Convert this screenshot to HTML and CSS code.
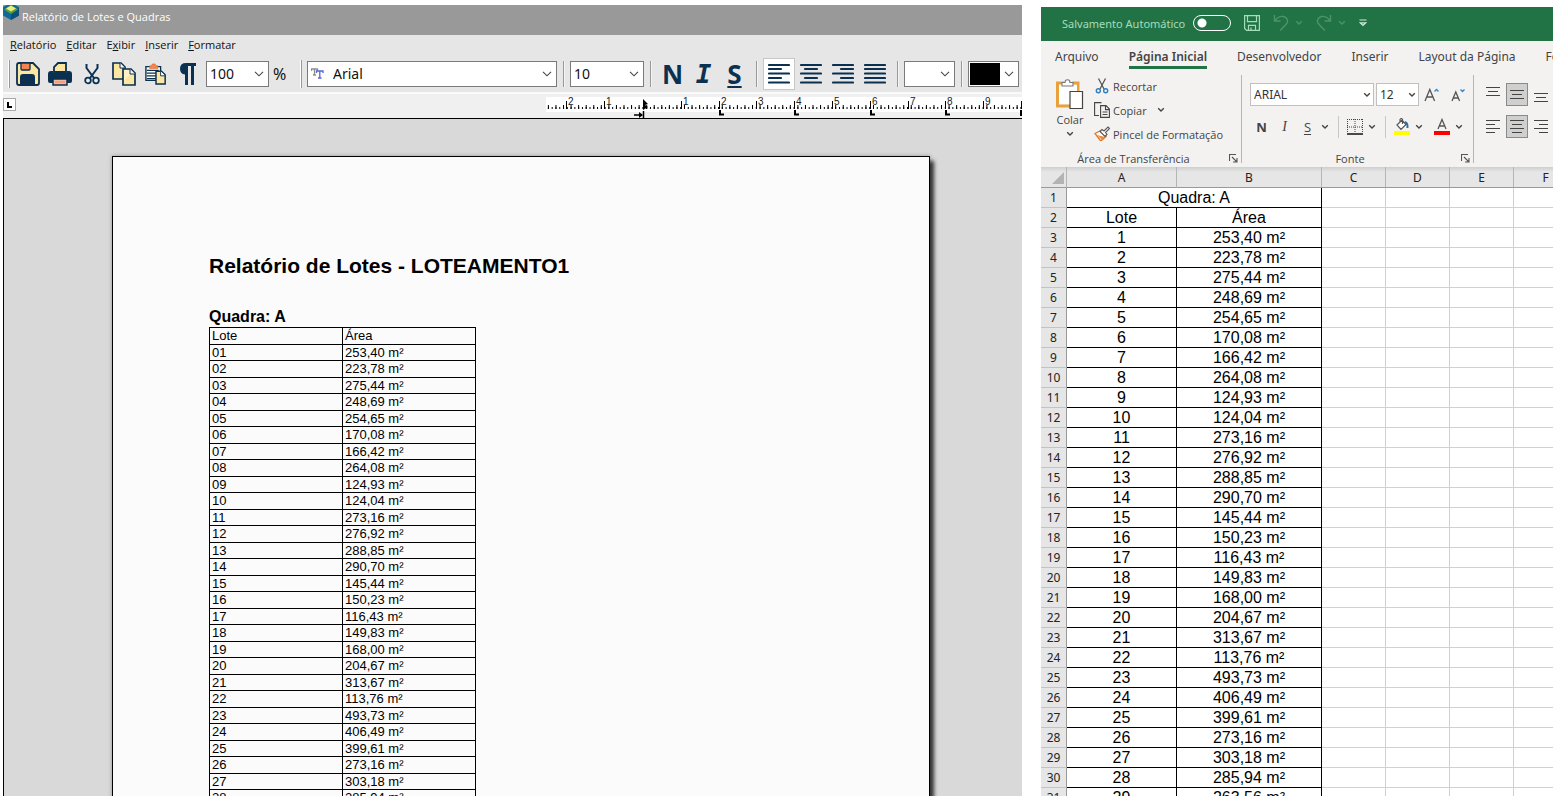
FILE: index.html
```html
<!DOCTYPE html>
<html lang="pt-BR">
<head>
<meta charset="utf-8">
<title>Relatório de Lotes e Quadras</title>
<link rel="stylesheet" href="styles.css">
</head>
<body>
<svg class="defs" aria-hidden="true">
  <symbol id="chev-lg" viewBox="0 0 10 6"><path d="M1 .8 5 4.8 9 .8" fill="none" stroke="#444" stroke-width="1.1"/></symbol>
  <symbol id="chev" viewBox="0 0 8 6"><path d="M1.2 1.2 4 4 6.800 1.2" fill="none" stroke="currentColor" stroke-width="1.4"/></symbol>
  <symbol id="launcher" viewBox="0 0 9 9"><path d="M.5 7V.5H7M3 3l4.500 4.500M8 4v4H4" fill="none" stroke="#555" stroke-width="1.1"/></symbol>
</svg>
<main class="desktop">
<section class="report">
  <header class="report-title">
    <svg width="16" height="16" viewBox="0 0 16 16"><path d="M0 2 8-2l8 4v8.500L8 15 0 10.500z" fill="#0b6a97"/><path d="M8 8v7l8-4.500V3z" fill="#0a4f7d"/><path d="M1 4.500 8 0l7 4.500L8 9z" fill="#5b9e3c"/><path d="m3 3.500 5-3 5 3-5 3z" fill="#e8ef7c"/></svg>
    <span>Relatório de Lotes e Quadras</span>
  </header>
  <nav class="menubar">
    <button><u>R</u>elatório</button><button><u>E</u>ditar</button><button>E<u>x</u>ibir</button><button><u>I</u>nserir</button><button><u>F</u>ormatar</button>
  </nav>
  <div class="toolbar">
    <i class="grip"></i>
    <div class="tools">
      <button aria-label="Salvar"><svg width="24" height="24" viewBox="0 0 24 24"><path d="M1 3q0-2 2-2h14l6 6v14q0 2-2 2H3q-2 0-2-2z" fill="#fbe6a2" stroke="#0b3050" stroke-width="1.800"/><path d="M5 1h9v6q0 1-1 1H6Q5 8 5 7z" fill="#f0864f" stroke="#0b3050" stroke-width="1.300"/><path d="M4 23v-8q0-3 3-3h9q3 0 3 3v8z" fill="#0b3050"/></svg></button>
      <button aria-label="Imprimir"><svg width="24" height="24" viewBox="0 0 24 24"><path d="M6 10V5l4-4h8v9z" fill="#fbe6a2" stroke="#0b3050" stroke-width="1.800"/><path d="M0 12q0-3 3-3h2v2h14V9h2q3 0 3 3v7q0 2-2 2H2q-2 0-2-2z" fill="#0b3050"/><path d="M5 17h14v6H5z" fill="#f7b79c" stroke="#0b3050" stroke-width="1.500"/><path d="M7 20h10" stroke="#e88863"/></svg></button>
      <button aria-label="Recortar"><svg width="16" height="22" viewBox="0 0 16 22"><path d="M2.500 1v4L10 15M13.500 1v4L6 15" fill="none" stroke="#0b3050" stroke-width="2"/><circle cx="4" cy="17.500" r="2.800" fill="#eee" stroke="#0b3050" stroke-width="1.800"/><circle cx="12" cy="17.500" r="2.800" fill="#eee" stroke="#0b3050" stroke-width="1.800"/></svg></button>
      <button aria-label="Copiar"><svg width="24" height="24" viewBox="0 0 24 24"><path d="M1 1h8l4 4v12H1z" fill="#fbe6a2" stroke="#0b3050" stroke-width="1.700"/><path d="M8 1v5h5" fill="#fff" stroke="#0b3050"/><path d="M11 7h8l4 4v12H11z" fill="#fbe6a2" stroke="#0b3050" stroke-width="1.700"/><path d="M12 8h6v4l-6 7z" fill="#fff0c8"/><path d="M18 7v5h5" fill="#fff" stroke="#0b3050"/></svg></button>
      <button aria-label="Colar"><svg width="22" height="22" viewBox="0 0 24 24"><path d="M1 4h16v15H1z" fill="#fff" stroke="#0b3050" stroke-width="1.500"/><path d="M2 8h13M2 11h10M2 14h10M2 17h10" stroke="#0b3050" stroke-width="1.300"/><path d="M5 6V3h2l1-2h3l1 2h2v3z" fill="#f0864f" stroke="#d6652f" stroke-width=".6"/><path d="M12 9h6l4 4v10H12z" fill="#fbe6a2" stroke="#0b3050" stroke-width="1.600"/><path d="M17 9v5h5" fill="#fff" stroke="#0b3050"/></svg></button>
      <button aria-label="Marcas de parágrafo"><svg width="18" height="22" viewBox="0 0 18 22"><path d="M17 0v3h-2v19h-3V3H9v19H6V11.500Q1 11 1 5.700 1 0 7 0z" fill="#0b3050"/></svg></button>
    </div>
    <div class="combo zoom"><select aria-label="Zoom"><option>100</option></select><svg width="10" height="6"><use href="#chev-lg"/></svg></div>
    <span class="percent">%</span>
    <i class="grip"></i>
    <div class="combo face"><svg class="tt" width="13" height="11" viewBox="0 0 13 11"><path d="M.5 3V1h6v2M3.500 1v6M2 7h3" fill="none" stroke="#8d8d8d" stroke-width="1.300"/><path d="M5.500 5V3h6.500v2M8.800 3v7M7 10h3.500" fill="none" stroke="#5a62d8" stroke-width="1.300"/></svg><select aria-label="Fonte"><option>Arial</option></select><svg width="10" height="6"><use href="#chev-lg"/></svg></div>
    <i class="sep"></i>
    <div class="combo size"><select aria-label="Tamanho"><option>10</option></select><svg width="10" height="6"><use href="#chev-lg"/></svg></div>
    <i class="sep"></i>
    <div class="tools">
      <button class="glyph">N</button><button class="glyph italic">I</button><button class="glyph under">S</button>
    </div>
    <i class="sep"></i>
    <div class="tools">
      <button class="on" aria-label="Alinhar à esquerda"><svg width="22" height="22" viewBox="0 0 22 22"><path d="M1 2h20M1 6h12M1 10.500h20M1 15h12M1 19.500h20" stroke="#0b3050" stroke-width="2.200" stroke-linecap="round"/></svg></button>
      <button aria-label="Centralizar"><svg width="22" height="22" viewBox="0 0 22 22"><path d="M1 2h20M5 6h12M1 10.500h20M5 15h12M1 19.500h20" stroke="#0b3050" stroke-width="2.200" stroke-linecap="round"/></svg></button>
      <button aria-label="Alinhar à direita"><svg width="22" height="22" viewBox="0 0 22 22"><path d="M1 2h20M9 6h12M1 10.500h20M9 15h12M1 19.500h20" stroke="#0b3050" stroke-width="2.200" stroke-linecap="round"/></svg></button>
      <button aria-label="Justificar"><svg width="22" height="22" viewBox="0 0 22 22"><path d="M1 2h20M1 6h20M1 10.500h20M1 15h20M1 19.500h20" stroke="#0b3050" stroke-width="2.200" stroke-linecap="round"/></svg></button>
    </div>
    <i class="sep"></i>
    <div class="combo color"><select aria-label="Cor de fundo"><option></option></select><svg width="10" height="6"><use href="#chev-lg"/></svg></div>
    <i class="sep"></i>
    <div class="combo color"><i class="swatch"></i><select aria-label="Cor do texto"><option></option></select><svg width="10" height="6"><use href="#chev-lg"/></svg></div>
  </div>
  <div class="ruler">
    <button class="tabstop" aria-label="Tabulação"><svg width="5" height="6"><path d="M1 0v5h4" fill="none" stroke="#000" stroke-width="2"/></svg></button>
    <svg class="scale" width="476" height="21" viewBox="0 0 476 21">
      <path d="M0 0h476v15H0z" fill="#fff"/>
      <path d="M1.900 11h474" stroke="#000" stroke-width="2" stroke-dasharray="1 2.780"/>
      <path d="M1.900 10h474" stroke="#000" stroke-width="4" stroke-dasharray="1 6.560"/>
      <path d="M20.500 4v8M58.500 4v8M135.500 4v8M173.500 4v8M210.500 4v8M248.500 4v8M286.500 4v8M324.500 4v8M362.500 4v8M399.500 4v8M437.500 4v8M475.500 4v8" stroke="#000"/>
      <path d="M174 13v4.500h4M249 13v4.500h4M325 13v4.500h4M400 13v4.500h4M475 13v6" fill="none" stroke="#000" stroke-width="2"/>
      <path d="M97 2v11l5-3-3-2 3-1z"/>
      <path d="M97.500 14v7M88 18h8" stroke="#000" stroke-width="1.500"/><path d="m93 15 4 3-4 3z"/>
      <g><text x="22" y="8">2</text><text x="60" y="8">1</text><text x="137" y="8">1</text><text x="175" y="8">2</text><text x="212" y="8">3</text><text x="250" y="8">4</text><text x="288" y="8">5</text><text x="326" y="8">6</text><text x="364" y="8">7</text><text x="401" y="8">8</text><text x="439" y="8">9</text></g>
    </svg>
  </div>
  <div class="canvas">
    <article class="paper">
      <h1>Relatório de Lotes - LOTEAMENTO1</h1>
      <h2>Quadra: A</h2>
      <table class="lots">
        <thead><tr><th>Lote</th><th>Área</th></tr></thead>
        <tbody>
        <tr><td>01</td><td>253,40 m²</td></tr>
        <tr><td>02</td><td>223,78 m²</td></tr>
        <tr><td>03</td><td>275,44 m²</td></tr>
        <tr><td>04</td><td>248,69 m²</td></tr>
        <tr><td>05</td><td>254,65 m²</td></tr>
        <tr><td>06</td><td>170,08 m²</td></tr>
        <tr><td>07</td><td>166,42 m²</td></tr>
        <tr><td>08</td><td>264,08 m²</td></tr>
        <tr><td>09</td><td>124,93 m²</td></tr>
        <tr><td>10</td><td>124,04 m²</td></tr>
        <tr><td>11</td><td>273,16 m²</td></tr>
        <tr><td>12</td><td>276,92 m²</td></tr>
        <tr><td>13</td><td>288,85 m²</td></tr>
        <tr><td>14</td><td>290,70 m²</td></tr>
        <tr><td>15</td><td>145,44 m²</td></tr>
        <tr><td>16</td><td>150,23 m²</td></tr>
        <tr><td>17</td><td>116,43 m²</td></tr>
        <tr><td>18</td><td>149,83 m²</td></tr>
        <tr><td>19</td><td>168,00 m²</td></tr>
        <tr><td>20</td><td>204,67 m²</td></tr>
        <tr><td>21</td><td>313,67 m²</td></tr>
        <tr><td>22</td><td>113,76 m²</td></tr>
        <tr><td>23</td><td>493,73 m²</td></tr>
        <tr><td>24</td><td>406,49 m²</td></tr>
        <tr><td>25</td><td>399,61 m²</td></tr>
        <tr><td>26</td><td>273,16 m²</td></tr>
        <tr><td>27</td><td>303,18 m²</td></tr>
        <tr><td>28</td><td>285,94 m²</td></tr>
        </tbody>
      </table>
    </article>
  </div>
</section>

<section class="sheet">
  <header class="sheet-title">
    <label class="autosave">Salvamento Automático <input type="checkbox" role="switch"></label>
    <button aria-label="Salvar"><svg width="16" height="16" viewBox="0 0 16 16"><path d="M.600.6h14.800v14.800H2.600l-2-2zM3.500.6v6h9v-6M4.500 15.400v-5h7v5M7 12.500v3" fill="none" stroke="#a6dcb9" stroke-width="1.200"/></svg></button>
    <div class="pair">
      <button aria-label="Desfazer"><svg width="16" height="18" viewBox="0 0 16 18"><path d="M1.500 1v6h6M1.500 7Q6 1.500 10.500 2.500 15 4 14.500 8 14 10 7 16.500" fill="none" stroke="#4b9468" stroke-width="1.400"/></svg></button>
      <button aria-label="Opções de desfazer"><svg width="8" height="6"><use href="#chev"/></svg></button>
    </div>
    <div class="pair">
      <button aria-label="Refazer"><svg width="16" height="18" viewBox="0 0 16 18"><path d="M14.500 1v6h-6M14.500 7Q10 1.500 5.500 2.500 1 4 1.500 8 2 10 9 16.500" fill="none" stroke="#4b9468" stroke-width="1.400"/></svg></button>
      <button aria-label="Opções de refazer"><svg width="8" height="6"><use href="#chev"/></svg></button>
    </div>
    <button aria-label="Personalizar"><svg width="8" height="8" viewBox="0 0 8 8"><path d="M.5 1h7M1.200 3.800 4 6.500l2.800-2.700z" fill="none" stroke="#c9ead5" stroke-width="1.200"/></svg></button>
  </header>
  <nav class="tabs">
    <button>Arquivo</button><button class="active">Página Inicial</button><button>Desenvolvedor</button><button>Inserir</button><button>Layout da Página</button><button>Fórmulas</button>
  </nav>
  <div class="ribbon">
    <div class="group clip">
      <div class="group-body">
        <button class="paste">
          <svg width="28" height="30" viewBox="0 0 28 30"><path d="M8 4H1.500v23H14" fill="none" stroke="#e9a23b" stroke-width="3"/><path d="M16 4h6v8" fill="none" stroke="#e9a23b" stroke-width="3"/><path d="M3 6h18v6h-7v13H3z" fill="#fff"/><path d="M6 7V3.500h3Q9 .7 11.500.7T14 3.500h3V7z" fill="#fff" stroke="#777" stroke-width="1.100"/><path d="M14 12.500h12.500v17H14z" fill="#fff" stroke="#444" stroke-width="1.200"/></svg>
          <span>Colar</span>
          <svg width="8" height="6"><use href="#chev"/></svg>
        </button>
        <div class="clip-list">
          <button><svg width="16" height="16" viewBox="0 0 16 16"><path d="M4.500.5 10 11M11.500.5 6 11" fill="none" stroke="#555" stroke-width="1.300"/><circle cx="4.300" cy="12.800" r="2" fill="none" stroke="#2f7fc1" stroke-width="1.400"/><circle cx="11.700" cy="12.800" r="2" fill="none" stroke="#2f7fc1" stroke-width="1.400"/></svg>Recortar</button>
          <button><svg width="16" height="16" viewBox="0 0 16 16"><path d="M5 13.500H.6V.6h6.900M6.600 3.600h5.400l3.400 3.400v8.400H6.600zM11.500 3.600v4h4M8.500 10h5M8.500 12.500h5" fill="none" stroke="#444" stroke-width="1.100"/></svg>Copiar<svg class="more" width="8" height="6"><use href="#chev"/></svg></button>
          <button><svg width="16" height="16" viewBox="0 0 16 16"><path d="M1 7.500 6 5l6 5.500L8 14q-1 1-2 0z" fill="#fff" stroke="#dd7422" stroke-width="1.300"/><path d="m3 9 5 5 3-3z" fill="#f08a3c"/><path d="m6 5.500 2-2 2 1.500 4-4 1.500 1.500-4 4 1.500 2-2 2z" fill="#fff" stroke="#555" stroke-width="1.100"/></svg>Pincel de Formatação</button>
        </div>
      </div>
      <div class="group-name"><span>Área de Transferência</span><button aria-label="Mais opções da área de transferência"><svg width="9" height="9"><use href="#launcher"/></svg></button></div>
    </div>
    <div class="group font">
      <div class="group-body rows">
        <div class="row">
          <div class="combo small name"><select aria-label="Fonte da célula"><option>ARIAL</option></select><svg width="8" height="6"><use href="#chev"/></svg></div>
          <div class="combo small pts"><select aria-label="Tamanho da fonte"><option>12</option></select><svg width="8" height="6"><use href="#chev"/></svg></div>
          <button class="grow" aria-label="Aumentar fonte"><svg width="16" height="16" viewBox="0 0 16 16"><path d="M1 14 5.800 2.500 10.600 14M2.600 10H9" fill="none" stroke="#555" stroke-width="1.300"/><path d="m10.500 4.500 2-2 2 2" fill="none" stroke="#2f86c8" stroke-width="1.300"/></svg></button>
          <button class="grow" aria-label="Diminuir fonte"><svg width="16" height="16" viewBox="0 0 16 16"><path d="M2 14 5.800 5 9.600 14M3.300 11H8.300" fill="none" stroke="#555" stroke-width="1.300"/><path d="m10.500 2.500 2 2 2-2" fill="none" stroke="#2f86c8" stroke-width="1.300"/></svg></button>
        </div>
        <div class="row styles">
          <button class="fmt bold">N</button><button class="fmt italic">I</button><button class="fmt under">S</button><button class="drop" aria-label="Opções de sublinhado"><svg width="8" height="6"><use href="#chev"/></svg></button>
          <i class="bar"></i>
          <button class="fmt" aria-label="Bordas"><svg width="16" height="16" viewBox="0 0 16 16"><path d="M0 .5h16M0 8h16M.5 0v14M15.500 0v14M8 0v14" fill="none" stroke="#444" stroke-dasharray="1 1"/><path d="M0 15h16" stroke="#111" stroke-width="1.500"/></svg></button><button class="drop" aria-label="Opções de bordas"><svg width="8" height="6"><use href="#chev"/></svg></button>
          <i class="bar"></i>
          <button class="fmt" aria-label="Cor de preenchimento"><svg width="16" height="17" viewBox="0 0 16 17"><path d="M0 13h16v4H0z" fill="#ff0"/><path d="m3 7 5-5 4 4.500-5 5zM6 4V1.500q1.500-2 2.500 0V6" fill="#fff" stroke="#555" stroke-width="1.200"/><path d="M11 4q3 1 2.500 6" fill="none" stroke="#2b6da8" stroke-width="2"/></svg></button><button class="drop" aria-label="Opções de preenchimento"><svg width="8" height="6"><use href="#chev"/></svg></button>
          <button class="fmt" aria-label="Cor da fonte"><svg width="16" height="17" viewBox="0 0 16 17"><path d="M0 13h16v4H0z" fill="#f00"/><path d="m4 11 4-9.500L12 11M5.500 8h5" fill="none" stroke="#555" stroke-width="1.300"/></svg></button><button class="drop" aria-label="Opções de cor da fonte"><svg width="8" height="6"><use href="#chev"/></svg></button>
        </div>
      </div>
      <div class="group-name"><span>Fonte</span><button aria-label="Mais opções de fonte"><svg width="9" height="9"><use href="#launcher"/></svg></button></div>
    </div>
    <div class="group align">
      <div class="group-body rows">
        <div class="row">
          <button aria-label="Alinhar em cima"><svg width="14" height="20" viewBox="0 0 14 20"><path d="M0 2.500h14M2 6.500h10M0 10.500h14" stroke="#444"/></svg></button>
          <button class="on" aria-label="Alinhar no meio"><svg width="14" height="20" viewBox="0 0 14 20"><path d="M0 5.500h14M2 9.500h10M0 13.500h14" stroke="#444"/></svg></button>
          <button aria-label="Alinhar embaixo"><svg width="14" height="20" viewBox="0 0 14 20"><path d="M0 8.500h14M2 12.500h10M0 16.500h14" stroke="#444"/></svg></button>
        </div>
        <div class="row">
          <button aria-label="À esquerda"><svg width="14" height="14" viewBox="0 0 14 14"><path d="M0 .5h14M0 4.500h9M0 8.500h14M0 12.500h9" stroke="#444"/></svg></button>
          <button class="on" aria-label="Ao centro"><svg width="14" height="14" viewBox="0 0 14 14"><path d="M0 .5h14M2 4.500h10M0 8.500h14M2 12.500h10" stroke="#444"/></svg></button>
          <button aria-label="À direita"><svg width="14" height="14" viewBox="0 0 14 14"><path d="M0 .5h14M5 4.500h9M0 8.500h14M5 12.500h9" stroke="#444"/></svg></button>
        </div>
      </div>
    </div>
  </div>
  <div class="grid-wrap">
  <table class="cells">
    <colgroup><col class="c-num"><col class="c-a"><col class="c-b"><col class="c-x"><col class="c-x"><col class="c-x"><col class="c-x"></colgroup>
    <thead><tr><th class="corner"><svg width="12" height="12"><path d="M12 0v12H0z" fill="#b3b3b3"/></svg></th><th>A</th><th>B</th><th>C</th><th>D</th><th>E</th><th>F</th></tr></thead>
    <tbody>
    <tr><th>1</th><td class="d" colspan="2">Quadra: A</td><td></td><td></td><td></td><td></td></tr>
    <tr><th>2</th><td class="d">Lote</td><td class="d">Área</td><td></td><td></td><td></td><td></td></tr>
    <tr><th>3</th><td class="d">1</td><td class="d">253,40 m²</td><td></td><td></td><td></td><td></td></tr>
    <tr><th>4</th><td class="d">2</td><td class="d">223,78 m²</td><td></td><td></td><td></td><td></td></tr>
    <tr><th>5</th><td class="d">3</td><td class="d">275,44 m²</td><td></td><td></td><td></td><td></td></tr>
    <tr><th>6</th><td class="d">4</td><td class="d">248,69 m²</td><td></td><td></td><td></td><td></td></tr>
    <tr><th>7</th><td class="d">5</td><td class="d">254,65 m²</td><td></td><td></td><td></td><td></td></tr>
    <tr><th>8</th><td class="d">6</td><td class="d">170,08 m²</td><td></td><td></td><td></td><td></td></tr>
    <tr><th>9</th><td class="d">7</td><td class="d">166,42 m²</td><td></td><td></td><td></td><td></td></tr>
    <tr><th>10</th><td class="d">8</td><td class="d">264,08 m²</td><td></td><td></td><td></td><td></td></tr>
    <tr><th>11</th><td class="d">9</td><td class="d">124,93 m²</td><td></td><td></td><td></td><td></td></tr>
    <tr><th>12</th><td class="d">10</td><td class="d">124,04 m²</td><td></td><td></td><td></td><td></td></tr>
    <tr><th>13</th><td class="d">11</td><td class="d">273,16 m²</td><td></td><td></td><td></td><td></td></tr>
    <tr><th>14</th><td class="d">12</td><td class="d">276,92 m²</td><td></td><td></td><td></td><td></td></tr>
    <tr><th>15</th><td class="d">13</td><td class="d">288,85 m²</td><td></td><td></td><td></td><td></td></tr>
    <tr><th>16</th><td class="d">14</td><td class="d">290,70 m²</td><td></td><td></td><td></td><td></td></tr>
    <tr><th>17</th><td class="d">15</td><td class="d">145,44 m²</td><td></td><td></td><td></td><td></td></tr>
    <tr><th>18</th><td class="d">16</td><td class="d">150,23 m²</td><td></td><td></td><td></td><td></td></tr>
    <tr><th>19</th><td class="d">17</td><td class="d">116,43 m²</td><td></td><td></td><td></td><td></td></tr>
    <tr><th>20</th><td class="d">18</td><td class="d">149,83 m²</td><td></td><td></td><td></td><td></td></tr>
    <tr><th>21</th><td class="d">19</td><td class="d">168,00 m²</td><td></td><td></td><td></td><td></td></tr>
    <tr><th>22</th><td class="d">20</td><td class="d">204,67 m²</td><td></td><td></td><td></td><td></td></tr>
    <tr><th>23</th><td class="d">21</td><td class="d">313,67 m²</td><td></td><td></td><td></td><td></td></tr>
    <tr><th>24</th><td class="d">22</td><td class="d">113,76 m²</td><td></td><td></td><td></td><td></td></tr>
    <tr><th>25</th><td class="d">23</td><td class="d">493,73 m²</td><td></td><td></td><td></td><td></td></tr>
    <tr><th>26</th><td class="d">24</td><td class="d">406,49 m²</td><td></td><td></td><td></td><td></td></tr>
    <tr><th>27</th><td class="d">25</td><td class="d">399,61 m²</td><td></td><td></td><td></td><td></td></tr>
    <tr><th>28</th><td class="d">26</td><td class="d">273,16 m²</td><td></td><td></td><td></td><td></td></tr>
    <tr><th>29</th><td class="d">27</td><td class="d">303,18 m²</td><td></td><td></td><td></td><td></td></tr>
    <tr><th>30</th><td class="d">28</td><td class="d">285,94 m²</td><td></td><td></td><td></td><td></td></tr>
    <tr><th>31</th><td class="d">29</td><td class="d">263,56 m²</td><td></td><td></td><td></td><td></td></tr>
    </tbody>
  </table>
  </div>
</section>
</main>
</body>
</html>
```
FILE: styles.css
```css
* { box-sizing: border-box; }
body { margin: 0; background: #fff; font-family: "Open Sans", "Noto Sans", sans-serif; font-size: 12px; color: #111; }
button { border: 0; background: none; padding: 0; margin: 0; font: inherit; color: inherit; display: flex; align-items: center; justify-content: center; white-space: nowrap; }
svg { display: block; flex: none; }
.defs { display: none; }
.desktop { display: grid; grid-template-columns: minmax(0, 1019fr) minmax(0, 512fr); gap: 19px; padding-left: 3px; height: 100vh; overflow: hidden; }

/* Report editor */
.report { margin-top: 5px; display: flex; flex-direction: column; min-height: 0; background: #f0f0f0; overflow: hidden; }
.report-title { height: 30px; flex: none; background: #999; color: #fff; display: flex; gap: 3px; font-size: 11px; line-height: 24px; }
.menubar { height: 20px; flex: none; display: flex; gap: 10px; padding: 0 0 2px 7px; background: #e6e6e6; font-size: 11px; }
.toolbar { height: 39px; flex: none; display: flex; align-items: center; padding: 0 3px 0 5px; background: #e6e6e6; border-bottom: 2px solid #fafafa; }
.tools { display: flex; flex: none; }
.tools button { width: 32px; height: 32px; }
.tools .on { background: #fff; border: 1px solid #c8c8c8; }
.grip { width: 2px; height: 28px; flex: none; margin-right: 2px; background: #fff; border-right: 1px solid #999; }
.sep { width: 2px; height: 26px; flex: none; margin: 0 5px 0 6px; background: #999; border-right: 1px solid #f4f4f4; }
.tools .glyph { width: 31px; font: bold 26px/1 "Open Sans", sans-serif; color: #0b3050; }
.tools .glyph.italic { font-family: "DejaVu Sans Mono", monospace; font-style: italic; }
.glyph.under { text-decoration: underline; text-decoration-thickness: 2px; text-underline-offset: 2px; }
.combo { display: grid; height: 26px; flex: none; align-items: center; background: #fff; border: 1px solid #7a7a7a; }
.combo > * { grid-area: 1 / 1; }
.combo > svg { justify-self: end; margin-right: 4px; pointer-events: none; }
.combo > .tt { justify-self: start; margin-left: 3px; }
.combo select { appearance: none; width: 100%; height: 100%; border: 0; background: none; padding: 0 0 0 3px; font: 14px "Noto Sans", sans-serif; color: #111; }
.zoom { width: 63px; margin-left: 2px; }
.percent { width: 38px; padding-left: 4px; font: 16px/22px "Noto Sans", sans-serif; }
.face { width: 250px; margin-left: 3px; }
.face select { padding-left: 25px; }
.size { width: 74px; }
.color { width: 51px; }
.swatch { width: 30px; height: 22px; margin-left: 1px; background: #000; }
.ruler { height: 24px; flex: none; display: flex; align-items: flex-start; justify-content: space-between; background: #f0f0f0; }
.tabstop { width: 13px; height: 13px; margin-top: 4px; border: 1px solid #aaa; background: #fff; }
.scale { margin-top: 3px; }
.scale text { font: 10px "Liberation Sans", sans-serif; fill: #222; }
.canvas { flex: 1; min-height: 0; border: solid #000; border-width: 1px 0 0 1px; background: #d9d9d9; padding: 37px 92px 0 108px; overflow: hidden; font-family: "Liberation Sans", Arial, sans-serif; color: #000; }
.paper { min-height: 1100px; border: 1px solid #000; background: #fbfbfb; padding: 96px 96px 0; box-shadow: 4px 5px 4px #333, 0 0 4px #999; }
.paper h1 { margin: 0 0 28px; font-size: 21px; line-height: 26px; white-space: nowrap; }
.paper h2 { margin: 0; font-size: 16px; line-height: 20px; }
.lots { border-collapse: collapse; table-layout: fixed; width: 267px; font-size: 13px; line-height: 14px; }
.lots th, .lots td { height: 16px; padding: 0 2px; border: 1px solid #000; font-weight: normal; text-align: left; }
.lots th, .lots tr:nth-child(even) td { height: 17px; }

/* Spreadsheet */
.sheet { margin-top: 7px; display: flex; flex-direction: column; min-width: 0; min-height: 0; overflow: hidden; color: #444; }
.sheet-title { height: 34px; flex: none; display: flex; align-items: center; gap: 13px; padding: 0 0 2px 21px; background: #217346; color: #4b9468; }
.autosave { display: flex; align-items: center; gap: 8px; font: 11px "Noto Sans", sans-serif; color: #a6dcb9; white-space: nowrap; }
.autosave input { appearance: none; width: 38px; height: 16px; margin: 0; border: 1px solid #fff; border-radius: 8px; background: radial-gradient(circle at 8px 7px, #fff 4px, transparent 5px); }
.pair { display: flex; align-items: center; gap: 6px; }
.tabs { height: 34px; flex: none; display: flex; gap: 30px; padding-left: 14px; background: #f3f2f1; overflow: hidden; font: 12px "Noto Sans", sans-serif; }
.tabs button { height: 28px; padding-top: 5px; border-bottom: 3px solid transparent; flex: none; }
.tabs .active { font-weight: 600; border-color: #217346; }
.ribbon { height: 92px; flex: none; display: flex; background: #f3f2f1; font-size: 11px; overflow: hidden; }
.group { flex: none; display: flex; flex-direction: column; justify-content: space-between; height: 88px; border-right: 1px solid #b5b5b5; }
.clip { width: 201px; }
.font { width: 232px; }
.align { border: 0; }
.group-body { display: flex; }
.group-body.rows { flex-direction: column; gap: 9px; padding: 8px 0 0 8px; }
.group-name { display: flex; align-items: center; height: 10px; }
.group-name span { flex: 1; text-align: center; padding-right: 3px; }
.group-name button { margin-right: 3px; }
.paste { flex-direction: column; justify-content: flex-start; width: 34px; margin-left: 12px; padding-top: 4px; gap: 3px; line-height: 16px; }
.clip-list { margin-left: 7px; }
.clip-list button { height: 24px; gap: 3px; padding-bottom: 2px; }
.clip-list .more { margin-left: 7px; }
.row { display: flex; align-items: center; height: 23px; }
.combo.small { height: 23px; border-color: #c0c0c0; }
.combo.small select { font-size: 12px; color: #333; }
.combo.small > svg { margin-right: 2px; }
.name { width: 124px; margin-right: 2px; }
.pts { width: 43px; }
.grow { width: 26px; }
.fmt { width: 23px; height: 23px; }
.fmt.bold { font-weight: 700; font-size: 13px; }
.fmt.italic { font: italic 14px "Liberation Serif", serif; }
.fmt.under { font-size: 13px; text-decoration: underline; text-underline-offset: 2px; }
.drop { width: 12px; height: 23px; }
.drop + .fmt { margin-left: 5px; }
.bar { width: 1px; height: 22px; margin: 0 4px 0 7px; background: #c8c8c8; }
.align .row { gap: 2px; }
.align .row button { width: 22px; height: 23px; }
.align .row .on { background: #cfcfcf; border: 1px solid #8a8a8a; }
.grid-wrap { flex: 1; min-height: 0; overflow: hidden; }
.cells { border-collapse: separate; border-spacing: 0; table-layout: fixed; width: 537px; color: #000; }
.c-num { width: 26px; }
.c-a { width: 110px; }
.c-b { width: 145px; }
.c-x { width: 64px; }
.cells th { height: 20px; padding: 0; background: #e6e6e6; border-right: 1px solid #999; border-bottom: 1px solid #c3c3c3; font: 12px/18px "Noto Sans", sans-serif; color: #222; }
.cells thead th { height: 21px; padding-top: 1px; border-right-color: #b5b5b5; border-bottom-color: #999; background: linear-gradient(#cfcfcf, #e6e6e6 5px); }
.corner svg { margin-left: 11px; }
.cells td { height: 20px; padding: 1px 0 0; border-right: 1px solid #d0d0d0; border-bottom: 1px solid #d0d0d0; font: 16px/18px "Liberation Sans", Arial, sans-serif; text-align: center; }
.cells .d { border-color: #000; }
```
